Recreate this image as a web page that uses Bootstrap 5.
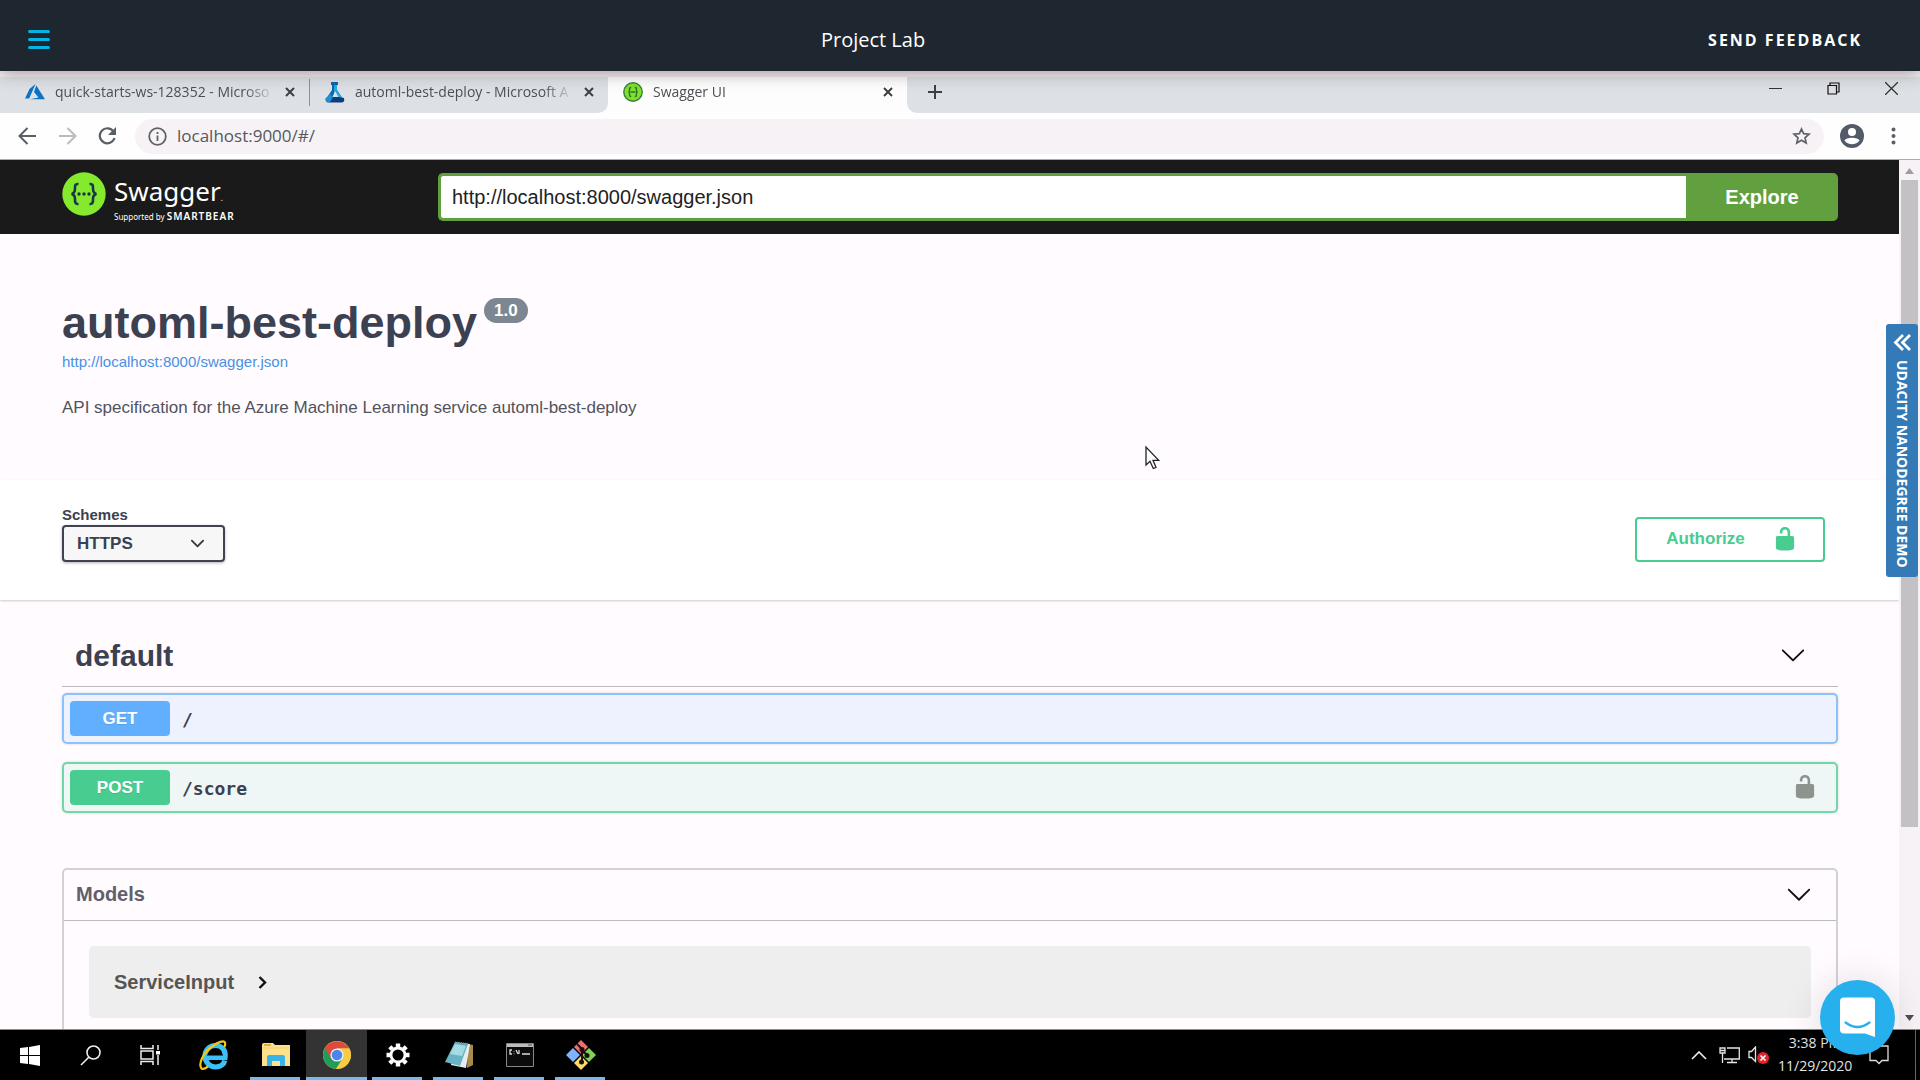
<!DOCTYPE html>
<html lang="en">
<head>
<meta charset="utf-8">
<meta name="viewport" content="width=device-width, initial-scale=1">
<title>Project Lab</title>
<link href="https://cdn.jsdelivr.net/npm/bootstrap@5.3.0/dist/css/bootstrap.min.css" rel="stylesheet">
<style>
  :root { --ui: "Open Sans", "Noto Sans", sans-serif; --doc: "Liberation Sans", Arial, sans-serif; --ink: #3b4151; }
  body { font-family: var(--doc); color: var(--ink); background: #fffbff; line-height: 1.2; }
  svg { display: block; flex: none; }
  .plain { border: 0; background: none; padding: 0; color: inherit; display: flex; align-items: center; justify-content: center; }

  .lab-head { height: 71px; padding: 8px 58px 0 28px; background: #1e272f; color: #fff; font-family: var(--ui); box-shadow: 0 2px 16px rgba(40,20,30,.38); z-index: 5; }
  .lab-title { font-size: 20px; line-height: 28px; }
  .feedback { font-size: 16px; line-height: 28px; font-weight: 700; letter-spacing: 2px; padding-left: 12px; }

  .frame-edge { height: 6px; background: #f1edf0; }
  .tabstrip { height: 36px; background: #fdfdfd; font-family: var(--ui); font-size: 14px; color: #4c4f54; }
  .strip-bg { background: #dde1e6; padding-bottom: 6px; }
  .strip-left { border-bottom-right-radius: 10px; padding-left: 10px; }
  .strip-right { border-bottom-left-radius: 10px; padding-left: 21px; }
  .tab-item { width: 299px; padding: 0 14px 0 15px; gap: 10px; }
  .tab-live { padding-bottom: 6px; }
  .tab-item + .tab-item { border-left: 1px solid #8e9196; border-image: linear-gradient(transparent 10%, #8e9196 10% 94%, transparent 94%) 1; }
  .tab-text { flex: 1 1 0; white-space: nowrap; line-height: 22px; -webkit-mask-image: linear-gradient(90deg, #000 86%, transparent); mask-image: linear-gradient(90deg, #000 86%, transparent); }
  .win-ctl { gap: 45px; padding: 0 22px 7px 0; }

  .toolbar { height: 47px; background: #fefefe; border-bottom: 1px solid #a9abae; padding: 0 24px 0 18px; color: #5f6368; }
  .nav-btns { gap: 21px; width: 117px; }
  .omnibox { height: 35px; border-radius: 18px; background: #f7f2f6; padding: 0 13px; gap: 10px; }
  .omnibox input { font-family: var(--ui); font-size: 17px; color: #55585c; border: 0; background: none; outline: 0; padding: 0; }
  .tool-end { gap: 27px; padding-left: 16px; }

  .doc-inset { padding-left: 62px; padding-right: 61px; }
  .swag-bar { background: #1a1a1a; height: 74px; }
  .swag-logo { width: 376px; height: 50px; gap: 8px; color: #fff; font-family: "Noto Sans", sans-serif; text-decoration: none; }
  .swag-word { font-size: 26px; line-height: 39px; }
  .swag-sub { font-size: 8px; line-height: 10px; }
  .swag-sub b { font-size: 10px; letter-spacing: 1px; font-weight: 600; }
  .spec-url { height: 48px; border: 3px solid #62a03f; border-right: 0; border-radius: 5px 0 0 5px; padding: 0 11px; font-size: 20px; color: #222; background: #fff; outline: 0; }
  .explore { height: 48px; width: 152px; border-radius: 0 5px 5px 0; background: #62a03f; color: #fff; font-size: 20px; font-weight: 700; }

  .info-block { padding-top: 62px; padding-bottom: 60px; }
  .api-name { font-size: 45px; line-height: 54px; font-weight: 700; margin: 0 0 2px; color: var(--ink); display: flex; align-items: flex-start; gap: 7px; }
  .ver { font-size: 17px; line-height: 25px; border-radius: 13px; background: #7d8792; color: #fff; padding: 0 10px; margin-top: 2px; }
  .spec-link { font-size: 15px; line-height: 20px; color: #4990e2; text-decoration: none; display: block; margin-bottom: 24px; }
  .api-desc { font-size: 17px; line-height: 24px; color: #50535c; margin: 0; }

  .scheme-box { background: #fff; padding-top: 25px; padding-bottom: 38px; box-shadow: 0 1px 2px rgba(0,0,0,.2); position: relative; }
  .scheme-box label { font-size: 15px; line-height: 20px; font-weight: 700; }
  .scheme-sel { width: 163px; height: 37px; border: 2px solid #41444e; border-radius: 4px; background-color: #f7f7f7; background-position: right 18px center; background-size: 15px; padding: 0 0 0 13px; font-size: 17px; font-weight: 700; color: var(--ink); box-shadow: 0 1px 3px rgba(0,0,0,.3); }
  .authorize { width: 190px; height: 45px; border: 2px solid #49cc90; border-radius: 4px; color: #49cc90; background: #fff; font-size: 17px; font-weight: 700; margin-right: 13px; gap: 27px; padding: 0 0 0 4px; }

  .tag-head { margin-top: 1px; padding: 37px 32px 12px 13px; border-bottom: 1px solid #bdbabf; margin-bottom: 6px; }
  .tag-head h3 { font-size: 30px; line-height: 36px; font-weight: 700; margin: 0; }
  .op { height: 51px; border: 2px solid; border-radius: 5px; padding: 0 18px 0 6px; gap: 12px; margin-bottom: 18px; box-shadow: 0 0 3px rgba(0,0,0,.16); }
  .op-get { border-color: #8bc2fd; background: #edf2fe; }
  .op-post { border-color: #71d7a8; background: #eef6f6; }
  .verb { width: 100px; height: 35px; border-radius: 4px; color: #fff; font-size: 17px; font-weight: 700; text-shadow: 0 1px 0 rgba(0,0,0,.1); padding-top: 1px; }
  .op-get .verb { background: #61affe; }
  .op-post .verb { background: #49cc90; }
  .path { font-family: "DejaVu Sans Mono", monospace; font-weight: 700; font-size: 18px; line-height: 24px; padding-top: 3px; color: var(--ink); }
  .models { border: 2px solid #d2d1d5; border-radius: 5px; margin-top: 55px; padding-bottom: 25px; }
  .models-head { height: 51px; border-bottom: 1px solid #bebbc0; padding: 0 24px 2px 12px; }
  .models h4, .models h5 { font-size: 20px; line-height: 24px; font-weight: 700; color: #5f606b; margin: 0; }
  .model-card { margin: 25px 25px 0; height: 72px; background: #eee; border-radius: 5px; padding: 0 25px; gap: 24px; }
  .models h5 { color: #555; }

  .rail { width: 21px; background: #f7f2f6; padding: 8px 2px 8px; }
  .rail-track { flex: 1 1 0; margin: 6px 0; }
  .rail-thumb { height: 78%; background: #c4c1c5; }

  .side-tab { position: fixed; right: 2px; top: 324px; width: 32px; height: 253px; background: #337ab7; color: #fff; border-radius: 3px; writing-mode: vertical-rl; font-family: var(--ui); font-weight: 700; font-size: 14px; gap: 9px; z-index: 6; text-decoration: none; white-space: nowrap; }
  .pointer { position: absolute; left: 1144px; top: 445px; z-index: 4; }
  .chat { position: fixed; right: 25px; bottom: 25px; width: 75px; height: 75px; border-radius: 50%; background: #26b0ee; z-index: 7; box-shadow: 0 2px 40px rgba(0,0,0,.14); }

  .taskbar { height: 51px; background: #000; border-top: 1px solid #8a888b; color: #fff; z-index: 5; }
  .task-btn { width: 61px; }
  .task-btn.slim { width: 60px; }
  .task-btn.broad { width: 65px; }
  .task-open::after { content: ""; position: absolute; bottom: 0; left: 5px; right: 6px; height: 3px; background: #76b9ed; }
  .task-live { background: #333; }
  .task-live::after { left: 0; right: 0; }
  .clock { font-family: var(--ui); font-size: 14px; line-height: 23px; color: #e6e6e6; width: 74px; text-align: center; padding-top: 1px; }
  .tray { gap: 9px; padding-right: 4px; }
  .tray-edge { width: 1px; background: #666; margin-left: 17px; }
</style>
<script src="https://cdn.jsdelivr.net/npm/bootstrap@5.3.0/dist/js/bootstrap.bundle.min.js"></script>
</head>
<body class="vh-100 d-flex flex-column overflow-hidden">

<header class="lab-head d-flex align-items-center justify-content-between position-relative flex-shrink-0">
  <button class="plain" aria-label="Menu"><svg width="22" height="19" stroke="#02b3e4" stroke-width="3" stroke-linecap="round"><path d="M1.500 1.500H20.500M1.500 9.500H20.500M1.500 17.500H20.500"/></svg></button>
  <div class="lab-title text-nowrap">Project Lab</div>
  <button class="plain feedback text-nowrap">SEND FEEDBACK</button>
</header>

<div class="frame-edge flex-shrink-0"></div>
<nav class="tabstrip d-flex flex-shrink-0" aria-label="Browser tabs">
  <div class="strip-bg strip-left d-flex">
    <div class="tab-item d-flex align-items-center">
      <svg width="20" height="17" viewBox="0 0 20 17"><path d="M10.500 0L4.500 5 0 14.500h4.200zM11.300 1.500L9 8l4.500 5.600L5 15.200h15z" fill="#0a72c7"/></svg>
      <span class="tab-text">quick-starts-ws-128352 - Microso</span>
      <button class="plain" aria-label="Close tab"><svg width="10" height="10" stroke="#3c4043" stroke-width="2"><path d="M1 1L9 9M9 1L1 9"/></svg></button>
    </div>
    <div class="tab-item d-flex align-items-center">
      <svg width="20" height="21" viewBox="0 0 20 21"><path d="M6 0h7v3h-1v5l6 9H1l6-9V3H6z" fill="#0669ae"/><path d="M9 3h3v5l6 9h-5L9 9z" fill="#2ca5dc"/><path d="M10 9l3.500 6h-6z" fill="#dde1e6"/><path d="M1 16l5-1h8l5 1q1 4-2 4.500H3Q0 20 1 16z" fill="#0b3f7c"/><path d="M0 17l5-5 3 3-3 5H2z" fill="#1c8fd0"/></svg>
      <span class="tab-text">automl-best-deploy - Microsoft A</span>
      <button class="plain" aria-label="Close tab"><svg width="10" height="10" stroke="#3c4043" stroke-width="2"><path d="M1 1L9 9M9 1L1 9"/></svg></button>
    </div>
  </div>
  <div class="tab-item tab-live d-flex align-items-center">
    <svg width="20" height="20" viewBox="0 0 20 20"><circle cx="10" cy="10" r="9.200" fill="#7fe12a" stroke="#3d7d42" stroke-width="1.400"/><path d="M8.200 5.500C6.500 5.300 6.600 6.500 6.600 8S6.300 10 5.300 10c1 0 1.300.5 1.300 2s-.1 2.700 1.600 2.500M11.800 5.500c1.700-.2 1.600 1 1.600 2.500s.3 2 1.300 2c-1 0-1.300.5-1.300 2s.1 2.700-1.600 2.500M7.500 10h5" fill="none" stroke="#2f6b3a" stroke-width="1.400"/></svg>
    <span class="tab-text">Swagger UI</span>
    <button class="plain" aria-label="Close tab"><svg width="10" height="10" stroke="#3c4043" stroke-width="2"><path d="M1 1L9 9M9 1L1 9"/></svg></button>
  </div>
  <div class="strip-bg strip-right d-flex flex-grow-1 align-items-center justify-content-between">
    <button class="plain" aria-label="New tab"><svg width="14" height="14" stroke="#3c4043" stroke-width="2"><path d="M7 0V14M0 7H14"/></svg></button>
    <div class="win-ctl d-flex align-items-center">
      <button class="plain" aria-label="Minimize"><svg width="13" height="13" stroke="#333"><path d="M0 6.500H13"/></svg></button>
      <button class="plain" aria-label="Restore"><svg width="13" height="13" fill="none" stroke="#111" stroke-width="1.200"><path d="M3 3V1H12V10H10M1 3.500H9.500V12H1z"/></svg></button>
      <button class="plain" aria-label="Close"><svg width="13" height="13" stroke="#333" stroke-width="1.300"><path d="M0 0L13 13M13 0L0 13"/></svg></button>
    </div>
  </div>
</nav>

<div class="toolbar d-flex align-items-center flex-shrink-0">
  <div class="nav-btns d-flex align-items-center">
    <button class="plain" aria-label="Back"><svg width="19" height="18" fill="none" stroke="#5a5e66" stroke-width="2"><path d="M18 9H2M9.500 1L1.500 9L9.500 17"/></svg></button>
    <button class="plain" aria-label="Forward"><svg width="19" height="18" fill="none" stroke="#babcbe" stroke-width="2"><path d="M1 9H17M9.500 1L17.500 9L9.500 17"/></svg></button>
    <button class="plain" aria-label="Reload"><svg width="19" height="18" fill="none" stroke="#5a5e66" stroke-width="2.200"><path d="M15.500 4.500A7.500 7.500 0 1 0 16.500 11"/><path d="M18 0V8H10z" fill="#5a5e66" stroke="none"/></svg></button>
  </div>
  <div class="omnibox d-flex align-items-center flex-grow-1">
    <svg width="19" height="19" fill="none" stroke="#5f6368" stroke-width="1.800"><circle cx="9.500" cy="9.500" r="8.300"/><path d="M9.500 8.500V14M9.500 5V7"/></svg>
    <input class="flex-grow-1" type="text" aria-label="Address" value="localhost:9000/#/">
    <button class="plain" aria-label="Bookmark"><svg width="19" height="18" viewBox="0 0 19 18" fill="none" stroke="#5f6368" stroke-width="1.700"><path d="M9.500 2L11.600 6.700L17 7.200L13 10.800L14.200 16L9.500 13.300L4.800 16L6 10.800L2 7.200L7.400 6.700z"/></svg></button>
  </div>
  <div class="tool-end d-flex align-items-center">
    <button class="plain" aria-label="Profile"><svg width="24" height="24" viewBox="0 0 24 24"><circle cx="12" cy="12" r="12" fill="#545b68"/><circle cx="12" cy="8" r="4" fill="#fff"/><path d="M4.500 16.500C6 12.800 18 12.800 19.500 16.500 16 21.500 8 21.500 4.500 16.500z" fill="#fff"/></svg></button>
    <button class="plain" aria-label="More"><svg width="5" height="18" fill="#5a5e66"><circle cx="2.500" cy="2.500" r="2"/><circle cx="2.500" cy="9" r="2"/><circle cx="2.500" cy="15.500" r="2"/></svg></button>
  </div>
</div>

<div class="d-flex flex-grow-1 overflow-hidden">
  <main class="flex-grow-1 overflow-hidden">
    <div class="swag-bar doc-inset d-flex align-items-center">
      <a class="swag-logo d-flex align-items-start flex-shrink-0" href="#">
        <svg width="44" height="44" viewBox="0 0 44 44"><circle cx="22" cy="22" r="21.700" fill="#85ea2d"/><path d="M16.500 12C13 11.500 13 13.500 13 16.500S12.500 21.500 9.500 22c3 .5 3.500 2 3.500 5s0 5.500 3.500 5M27.500 12c3.500-.5 3.500 1.500 3.500 4.500s.5 5 3.500 5.500c-3 .5-3.500 2-3.500 5s0 5.500-3.500 5" fill="none" stroke="#173647" stroke-width="2.600"/><g fill="#173647"><circle cx="17" cy="22" r="1.700"/><circle cx="22" cy="22" r="1.700"/><circle cx="27" cy="22" r="1.700"/></g></svg>
        <span class="d-flex flex-column"><span class="swag-word">Swagger<span class="swag-sub">.</span></span><span class="swag-sub text-nowrap">Supported by <b>SMARTBEAR</b></span></span>
      </a>
      <input class="spec-url flex-grow-1" type="text" aria-label="Specification URL" value="http://localhost:8000/swagger.json">
      <button class="plain explore">Explore</button>
    </div>

    <section class="info-block doc-inset">
      <h2 class="api-name">automl-best-deploy <span class="ver">1.0</span></h2>
      <a class="spec-link" href="#">http://localhost:8000/swagger.json</a>
      <p class="api-desc">API specification for the Azure Machine Learning service automl-best-deploy</p>
    </section>

    <section class="scheme-box doc-inset d-flex justify-content-between align-items-end">
      <div class="d-flex flex-column">
        <label for="scheme">Schemes</label>
        <select id="scheme" class="form-select scheme-sel"><option>HTTPS</option></select>
      </div>
      <button class="plain authorize">Authorize
        <svg width="26" height="26" viewBox="0 1 20 20" fill="#49cc90"><path d="M15.800 8H14V5.600C14 2.703 12.665 1 10 1 7.334 1 6 2.703 6 5.600V6h2v-.801C8 3.754 8.797 3 10 3c1.203 0 2 .754 2 2.199V8H4c-.553 0-1 .646-1 1.199V17c0 .549.428 1.139.951 1.307l1.197.387C5.672 18.861 6.550 19 7.100 19h5.800c.549 0 1.428-.139 1.951-.307l1.196-.387c.524-.167.953-.757.953-1.306V9.199C17 8.646 16.352 8 15.800 8z"/></svg>
      </button>
    </section>

    <section class="doc-inset">
      <div class="tag-head d-flex justify-content-between align-items-center">
        <h3>default</h3>
        <button class="plain" aria-label="Collapse default"><svg width="26" height="26" viewBox="0 1 20 20" fill="#111"><path d="M17.418 6.109c.272-.268.709-.268.979 0s.271.701 0 .969l-7.908 7.830c-.27.268-.707.268-.979 0l-7.908-7.830c-.27-.268-.27-.701 0-.969.271-.268.709-.268.979 0L10 13.250l7.418-7.141z"/></svg></button>
      </div>
      <div class="op op-get d-flex align-items-center">
        <button class="plain verb">GET</button><span class="path flex-grow-1">/</span>
      </div>
      <div class="op op-post d-flex align-items-center mb-0">
        <button class="plain verb">POST</button><span class="path flex-grow-1">/score</span>
        <button class="plain" aria-label="Unlocked"><svg width="26" height="26" viewBox="0 1 20 20" fill="#8d948d"><path d="M15.800 8H14V5.600C14 2.703 12.665 1 10 1 7.334 1 6 2.703 6 5.600V6h2v-.801C8 3.754 8.797 3 10 3c1.203 0 2 .754 2 2.199V8H4c-.553 0-1 .646-1 1.199V17c0 .549.428 1.139.951 1.307l1.197.387C5.672 18.861 6.550 19 7.100 19h5.800c.549 0 1.428-.139 1.951-.307l1.196-.387c.524-.167.953-.757.953-1.306V9.199C17 8.646 16.352 8 15.800 8z"/></svg></button>
      </div>

      <div class="models">
        <div class="models-head d-flex justify-content-between align-items-center">
          <h4>Models</h4>
          <button class="plain" aria-label="Collapse models"><svg width="26" height="26" viewBox="0 0 20 20" fill="#111"><path d="M17.418 6.109c.272-.268.709-.268.979 0s.271.701 0 .969l-7.908 7.830c-.27.268-.707.268-.979 0l-7.908-7.830c-.27-.268-.27-.701 0-.969.271-.268.709-.268.979 0L10 13.250l7.418-7.141z"/></svg></button>
        </div>
        <div class="model-card d-flex align-items-center">
          <h5>ServiceInput</h5>
          <button class="plain" aria-label="Expand ServiceInput"><svg width="9" height="13" fill="none" stroke="#111" stroke-width="2.400"><path d="M1.500 1L7 6.500L1.500 12"/></svg></button>
        </div>
      </div>
    </section>
  </main>
  <div class="rail d-flex flex-column align-items-stretch">
    <svg class="mx-auto" width="9" height="6" fill="#a09da1"><path d="M0 6L4.500 0L9 6z"/></svg>
    <div class="rail-track"><div class="rail-thumb"></div></div>
    <svg class="mx-auto" width="9" height="6" fill="#504d51"><path d="M0 0L4.500 6L9 0z"/></svg>
  </div>
</div>

<footer class="taskbar d-flex justify-content-between flex-shrink-0">
  <div class="d-flex">
    <button class="plain task-btn slim" aria-label="Start"><svg width="20" height="21" fill="#fff"><path d="M0 3L8 2V10H0zM9 2L20 0V10H9zM0 11H8V19L0 18zM9 11H20V21L9 19z"/></svg></button>
    <button class="plain task-btn slim" aria-label="Search"><svg width="21" height="21" fill="none" stroke="#eee" stroke-width="1.600"><circle cx="13.500" cy="7.500" r="6.500"/><path d="M9 12L1 20"/></svg></button>
    <button class="plain task-btn slim" aria-label="Task view"><svg width="20" height="20" fill="none" stroke="#eee" stroke-width="1.500"><path d="M1 0V3.500H13V0M1 20V16.500H13V20M1 6H13V14H1zM18 0V5M18 10V20"/><path d="M16 6H20V9.500H16z" fill="#fff" stroke="none"/></svg></button>
    <button class="plain task-btn broad" aria-label="Internet Explorer"><svg width="30" height="30" viewBox="0 0 30 30"><path d="M8.500 17.500H27C28 9.500 23.500 5.500 17.500 5.500S7 10 7 16s4.500 11 10.500 11c5 0 8.500-2.500 9.200-6.500" fill="none" stroke="#3cc0f5" stroke-width="5.200"/><path d="M9 15H25" stroke="#000" stroke-width="1"/><path d="M3.500 28.500C0 24 5 13 14 6.500 20 2 26 0 27 2.500 27.500 4 27 5.500 26.500 7 M3.500 28.500C5 29.500 8 28 10 26.500" fill="none" stroke="#f6c51b" stroke-width="2.200"/></svg></button>
    <button class="plain task-btn task-open position-relative" aria-label="File Explorer"><svg width="28" height="24"><path d="M0 2Q0 0 2 0H11L13 2H28V23H0z" fill="#fde28b"/><path d="M2 2H9" stroke="#d99b16" stroke-width="1.500"/><path d="M0 5H28" stroke="#f5d068"/><path d="M5 23V14Q5 12 7 12H21Q23 12 23 14V23H18V18H10V23z" fill="#39b4ea"/></svg></button>
    <button class="plain task-btn task-open task-live position-relative" aria-label="Chrome"><svg width="28" height="28" viewBox="0 0 28 28"><circle cx="14" cy="14" r="14" fill="#f7cb45"/><path d="M14 14L1.900 7A14 14 0 0 0 13 28L20 17.500z" fill="#1f9d59"/><path d="M14 14L7.900 17.500L1.900 7A14 14 0 0 1 26.100 7.500H14z" fill="#dc4b3e"/><path d="M14 7.500H26.200A14 14 0 0 1 13 28L19.700 17.300z" fill="#f7cb45"/><circle cx="14" cy="14" r="6.600" fill="#f3f3f3"/><circle cx="14" cy="14" r="5.300" fill="#4a86ee"/></svg></button>
    <button class="plain task-btn task-open position-relative" aria-label="Settings"><svg width="24" height="24" viewBox="-12 -12 24 24" fill="none" stroke="#fff"><circle r="7" stroke-width="2.800"/><g stroke-width="4.400"><path d="M0-8V-11.500M0 8V11.500M-8 0H-11.500M8 0H11.500M5.700-5.700L8.200-8.200M-5.700 5.700L-8.200 8.200M5.700 5.700L8.200 8.200M-5.700-5.700L-8.200-8.200"/></g></svg></button>
    <button class="plain task-btn task-open position-relative" aria-label="Notepad"><svg width="28" height="28" viewBox="0 0 28 28"><path d="M23 3L28 4V24L22 27z" fill="#a98a49"/><path d="M10 1L25 3L21 27L6 24z" fill="#e7eef1"/><path d="M10 1L23 3L15 25L0 21z" fill="#68b3c4"/><path d="M10 3L21 5L17 15L5 13z" fill="#a4dbe4"/><path d="M10 1.500L24 3" stroke="#888" stroke-width="2" stroke-dasharray="1 1"/></svg></button>
    <button class="plain task-btn task-open position-relative" aria-label="Command Prompt"><svg width="28" height="24" viewBox="0 0 28 24"><path d="M.5.5H27.500V23.500H.5z" fill="#0b0b0b" stroke="#85898c"/><path d="M1 1H27V4H1z" fill="#b9bdc0"/><path d="M22 2H26" stroke="#455" /><path d="M6 7H4V11H6M8 8V8.500M8 10V10.500M10 7L12 11M13 7V11M16 11H24" fill="none" stroke="#ddd" stroke-width="1.300"/></svg></button>
    <button class="plain task-btn task-open position-relative" aria-label="Git"><svg width="30" height="30" viewBox="0 0 30 30"><path d="M15 0L22 7L15 14L8 7z" fill="#f06f73"/><path d="M7 8L14 15L7 22L0 15z" fill="#80b3ff"/><path d="M23 8L30 15L23 22L16 15z" fill="#80d25a"/><path d="M15 16L22 23L15 30L8 23z" fill="#ffdc6a"/><path d="M11 4L16 9V22M16 10L21 15" fill="none" stroke="#1a1212" stroke-width="2"/><g fill="#1a1212"><circle cx="16" cy="9.500" r="2.500"/><circle cx="21" cy="15.500" r="2.500"/><circle cx="15.500" cy="22" r="2.500"/></g></svg></button>
  </div>
  <div class="tray d-flex align-items-stretch">
    <div class="d-flex align-items-center gap-2">
      <svg class="me-1" width="16" height="9" fill="none" stroke="#eee" stroke-width="1.600"><path d="M1 8L8 1L15 8"/></svg>
      <svg width="21" height="17" fill="none" stroke="#e6e6e6" stroke-width="1.300"><path d="M8 1H20.300V12H5M13 12V15.500M8 15.500H18M1 1H6V6H1zM1 3.500H6M3.500 6V16"/></svg>
      <svg width="21" height="18" fill="none" stroke="#e6e6e6" stroke-width="1.300"><path d="M1 5.500H3.500L7.500 1V15.500L3.500 11.500H1z"/><circle cx="15" cy="12" r="6" fill="#e3242b" stroke="none"/><path d="M12.500 9.500L17.500 14.500M17.500 9.500L12.500 14.500" stroke="#fff" stroke-width="1.600"/></svg>
    </div>
    <div class="clock">3:38 PM<br>11/29/2020</div>
    <svg class="align-self-center ms-2" width="20" height="20" fill="none" stroke="#e6e6e6" stroke-width="1.300"><path d="M1 1H19V15.500H13L10 18.500L7 15.500H1z"/></svg>
    <div class="tray-edge"></div>
  </div>
</footer>

<svg class="pointer" width="18" height="26" fill="#fff" stroke="#222" stroke-width="1.300"><path d="M2 2V20L6 16.300L9.300 23.500L12 22.300L9 15.300H14.700z"/></svg>

<a class="side-tab d-flex align-items-center justify-content-center" href="#">
  <svg width="18" height="17" fill="none" stroke="#fff" stroke-width="2.800"><path d="M10 1L2.500 8.500L10 16M17 1L9.500 8.500L17 16"/></svg>
  UDACITY NANODEGREE DEMO
</a>

<button class="plain chat" aria-label="Open chat"><svg width="36" height="41"><path d="M4 0.500H31Q35 .5 35 4.500V40L25 36.500H4Q0 36.500 0 32.500V4.500Q0 .5 4 .5z" fill="#fff"/><path d="M5.500 25.500Q17.500 34.500 29.500 25.500" fill="none" stroke="#26b0ee" stroke-width="2.200" stroke-linecap="round"/></svg></button>
</body>
</html>
